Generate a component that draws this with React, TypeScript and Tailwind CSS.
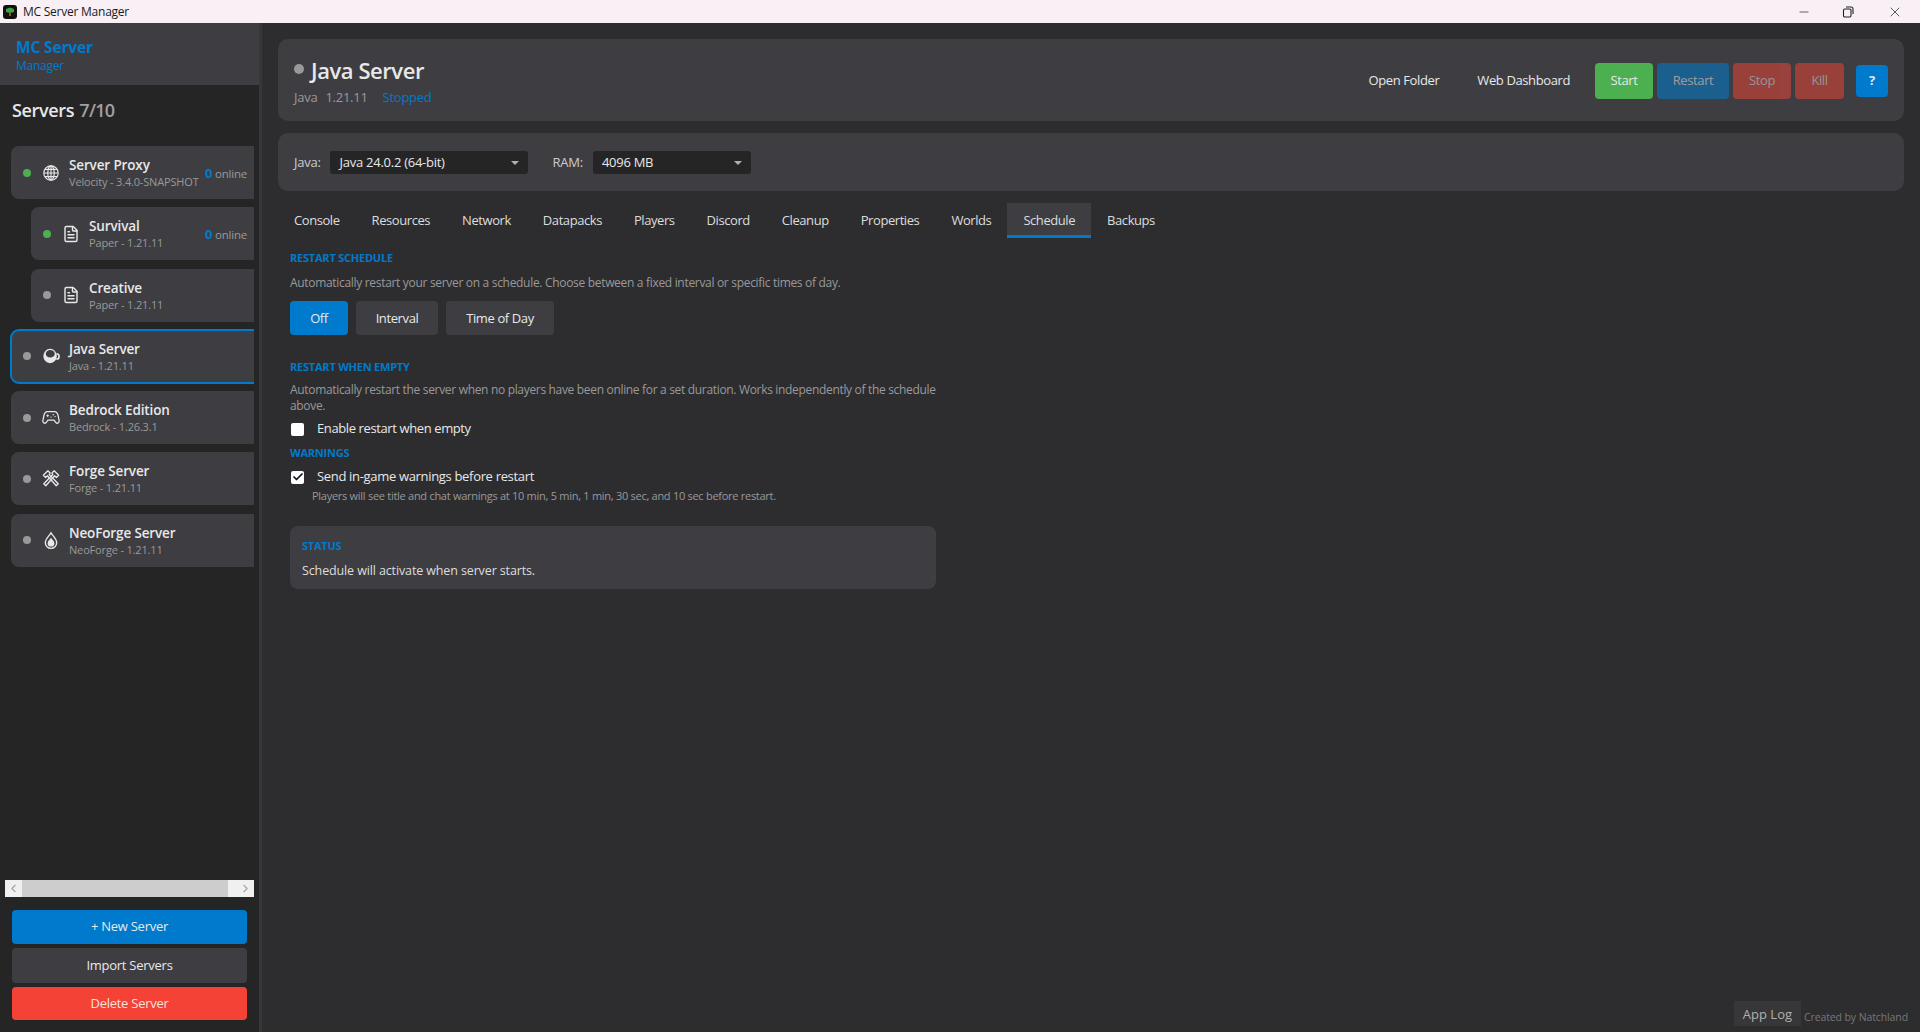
import React from "react";
import { Minus, X, Check, ChevronLeft, ChevronRight, FileText } from "lucide-react";

const ink = "#e8e8e8";

function Hammers() {
  return (
    <svg viewBox="0 0 20 20" width="19" height="19" fill="none" stroke={ink} strokeWidth="1.5" strokeLinejoin="round" strokeLinecap="round">
      <path d="M6.5 1.5 L1.5 6.5 L4 9 L6 7 L15.8 18 L18 15.8 L8 5.5 L9 4 Z" />
      <path d="M13.5 1.5 L18.5 6.5 L16 9 L14 7 L4.2 18 L2 15.8 L12 5.5 L11 4 Z" />
    </svg>
  );
}

function Cup() {
  return (
    <svg viewBox="0 0 20 20" width="18" height="18">
      <ellipse cx="9" cy="10" rx="7.5" ry="8" fill={ink} />
      <ellipse cx="9.2" cy="7.6" rx="5" ry="4.2" fill="#3e3e42" />
      <path d="M16 7.5 a3 3 0 0 1 0 6" fill="none" stroke={ink} strokeWidth="1.8" />
    </svg>
  );
}

function Flame() {
  return (
    <svg viewBox="0 0 20 20" width="19" height="19">
      <path d="M10 1.5 C12 5 16.3 8 16.3 12.5 A6.3 6.3 0 0 1 3.7 12.5 C3.7 8 8 5 10 1.5 Z" fill="none" stroke={ink} strokeWidth="1.5" />
      <path d="M10 7 C11 9 13.8 10.5 13.8 13 A3.8 3.8 0 0 1 6.2 13 C6.2 10.5 9 9 10 7 Z" fill={ink} />
    </svg>
  );
}

function GlobeGrid() {
  return (
    <svg viewBox="0 0 20 20" width="18" height="18" fill="none" stroke={ink} strokeWidth="1.3">
      <circle cx="10" cy="10" r="8" />
      <ellipse cx="10" cy="10" rx="3.6" ry="8" />
      <path d="M10 2 V18 M2 10 H18 M3.2 6 H16.8 M3.2 14 H16.8" />
    </svg>
  );
}

function Pad() {
  return (
    <svg viewBox="0 0 20 20" width="19" height="19" fill="none" stroke={ink} strokeWidth="1.4" strokeLinejoin="round">
      <path d="M6 3.5 H14 C16.5 3.5 17.4 5.5 17.9 8 L19 13.5 C19.4 16 16.9 17.3 15.4 15.6 L13.4 13 H6.6 L4.6 15.6 C3.1 17.3 0.6 16 1 13.5 L2.1 8 C2.6 5.5 3.5 3.5 6 3.5 Z" />
      <path d="M6.3 6.5 V9.5 M4.8 8 H7.8" strokeWidth="1" />
      <circle cx="12.5" cy="7" r="0.8" fill={ink} stroke="none" />
      <circle cx="14.5" cy="9" r="0.8" fill={ink} stroke="none" />
      <circle cx="10" cy="9.5" r="0.7" fill={ink} stroke="none" />
    </svg>
  );
}

function Dot({ on, big }: { on?: boolean; big?: boolean }) {
  return <span className={`block rounded-full shrink-0 ${big ? "w-[10px] h-[10px]" : "w-[8px] h-[8px]"} ${on ? "bg-[#4caf50]" : "bg-[#999999]"}`} />;
}

type Row = { name: string; sub: string; on?: boolean; child?: boolean; sel?: boolean; online?: boolean; icon: React.ReactNode };

const doc = <FileText size={18} strokeWidth={1.9} color={ink} />;

const rows: Row[] = [
  { name: "Server Proxy", sub: "Velocity - 3.4.0-SNAPSHOT", on: true, online: true, icon: <GlobeGrid /> },
  { name: "Survival", sub: "Paper - 1.21.11", on: true, child: true, online: true, icon: doc },
  { name: "Creative", sub: "Paper - 1.21.11", child: true, icon: doc },
  { name: "Java Server", sub: "Java - 1.21.11", sel: true, icon: <Cup /> },
  { name: "Bedrock Edition", sub: "Bedrock - 1.26.3.1", icon: <Pad /> },
  { name: "Forge Server", sub: "Forge - 1.21.11", icon: <Hammers /> },
  { name: "NeoForge Server", sub: "NeoForge - 1.21.11", icon: <Flame /> },
];

function Card({ r }: { r: Row }) {
  return (
    <div
      className={`h-[53px] rounded-[8px] bg-[#3e3e42] flex items-center pr-[24px] shrink-0 ${
        r.child ? "ml-[26px] w-[240px] pl-[12px]" : "ml-[6px] w-[260px] pl-[12px]"
      } ${r.sel ? "outline-2 outline-[#007acc] -outline-offset-1" : ""}`}
    >
      <Dot on={r.on} />
      <span className="w-[18px] h-[18px] ml-[11px] mr-[9px] flex items-center justify-center shrink-0">{r.icon}</span>
      <div className="flex-1 min-w-0 flex flex-col pt-[2px]">
        <span className="text-[13.5px] leading-[17px] font-semibold text-[#e8e8e8] tracking-[-0.01em] whitespace-nowrap">{r.name}</span>
        <span className="text-[11px] leading-[16px] text-[#999999] tracking-[-0.015em] whitespace-nowrap">{r.sub}</span>
      </div>
      {r.online && (
        <span className="mt-[2px] text-[11.5px] text-[#999999] whitespace-nowrap tracking-[-0.02em] flex items-baseline">
          <b className="text-[13px] text-[#007acc] font-bold mr-[3px]">0</b>online
        </span>
      )}
    </div>
  );
}

function SectionTitle({ children }: { children: React.ReactNode }) {
  return <div className="text-[11px] leading-[16px] font-bold text-[#007acc] uppercase tracking-[-0.02em]">{children}</div>;
}

function Box({ checked }: { checked?: boolean }) {
  return (
    <span className="w-[13px] h-[13px] bg-white rounded-[2px] flex items-center justify-center shrink-0 ml-[1px]">
      {checked && <Check size={12} strokeWidth={3.5} color="#111111" />}
    </span>
  );
}

const tabs = ["Console", "Resources", "Network", "Datapacks", "Players", "Discord", "Cleanup", "Properties", "Worlds", "Schedule", "Backups"];

export default function App() {
  return (
    <div className="w-[1920px] h-[1032px] flex flex-col overflow-hidden bg-[#2d2d30] font-['Open_Sans','Noto_Sans',sans-serif] text-[#e8e8e8]">
      <div className="h-[23px] bg-[#f9f0f5] flex items-center shrink-0 text-[#1a1a1a]">
        <span className="ml-[3px] w-[14px] h-[14px] rounded-[3px] bg-[#111111] flex items-center justify-center">
          <svg viewBox="0 0 10 10" width="10" height="10">
            <path d="M1 2 L5 0.5 L9 2 L9 5 L5 6 L1 5 Z" fill="#3fa53a" />
            <rect x="4" y="5.5" width="2" height="3.5" fill="#8a5a2b" />
          </svg>
        </span>
        <span className="ml-[6px] text-[12px] tracking-[-0.02em]">MC Server Manager</span>
        <div className="ml-auto flex items-center text-[#222222]">
          <Minus size={14} strokeWidth={1.2} className="mr-[31px]" />
          <svg viewBox="0 0 12 12" width="12" height="12" fill="none" stroke="#222222" strokeWidth="1.1" className="mr-[33px]">
            <rect x="1.5" y="3" width="7.5" height="8" rx="1.2" />
            <path d="M4 1 H9 a2 2 0 0 1 2 2 V8" />
          </svg>
          <X size={16} strokeWidth={1.1} className="mr-[17px]" />
        </div>
      </div>

      <div className="flex-1 flex min-h-0">
        <aside className="w-[259px] bg-[#252526] flex flex-col shrink-0">
          <div className="h-[62px] bg-[#3e3e42] pl-[16px] pt-[14px] flex flex-col shrink-0">
            <span className="text-[15.5px] leading-[21px] font-bold text-[#007acc] tracking-[-0.01em]">MC Server</span>
            <span className="text-[12px] leading-[15px] text-[#007acc] tracking-[-0.02em]">Manager</span>
          </div>
          <div className="pl-[12px] pt-[13px] h-[61px] text-[18px] leading-[24px] font-semibold shrink-0 tracking-[-0.02em]">
            Servers <span className="ml-[1px] font-semibold text-[#a0a0a0] tracking-[-0.04em]">7/10</span>
          </div>
          <div className="ml-[5px] w-[249px] flex-1 overflow-hidden flex flex-col gap-[8.3px] min-h-0">
            {rows.map((r) => (
              <Card key={r.name} r={r} />
            ))}
          </div>
          <div className="ml-[5px] w-[249px] h-[17px] flex shrink-0">
            <span className="w-[17px] bg-[#f0f0f0] flex items-center justify-center">
              <ChevronLeft size={13} color="#a3a3a3" />
            </span>
            <span className="flex-1 bg-[#cdcdcd]" />
            <span className="w-[26px] bg-[#f0f0f0] flex items-center justify-end pr-[2px]">
              <ChevronRight size={13} color="#a3a3a3" />
            </span>
          </div>
          <div className="mx-[12px] mt-[13px] mb-[12px] flex flex-col gap-[4px] shrink-0 text-[13px] tracking-[-0.02em]">
            <button className="h-[34px] rounded-[4px] bg-[#007acc] text-[#e8e8e8]">+ New Server</button>
            <button className="h-[35px] rounded-[4px] bg-[#3e3e42] text-[#e8e8e8]">Import Servers</button>
            <button className="h-[33px] rounded-[4px] bg-[#f44336] text-[#f5e0de]">Delete Server</button>
          </div>
        </aside>

        <div className="w-[3px] bg-[#37373a] shrink-0" />

        <main className="flex-1 min-w-0 flex flex-col pt-[16px] px-[16px] pb-[6px]">
          <div className="h-[82px] rounded-[10px] bg-[#3e3e42] flex items-center pl-[16px] pr-[16px] shrink-0">
            <div className="flex flex-col">
              <div className="flex items-center h-[32px] -mt-[1px]">
                <span className="block -mt-[2px]">
                  <Dot big />
                </span>
                <span className="ml-[7px] text-[22px] leading-[30px] font-semibold tracking-[-0.02em]">Java Server</span>
              </div>
              <div className="text-[13px] leading-[18px] text-[#999999] flex tracking-[-0.02em] mt-[2px]">
                <span>Java</span>
                <span className="ml-[8px]">1.21.11</span>
                <span className="ml-[15px] text-[#007acc]">Stopped</span>
              </div>
            </div>
            <div className="ml-auto flex items-center text-[13px] tracking-[-0.03em] mt-[1px]">
              <span className="mr-[38px]">Open Folder</span>
              <span className="mr-[25px]">Web Dashboard</span>
              <span className="h-[36px] w-[58px] rounded-[4px] bg-[#4caf50] flex items-center justify-center mr-[4px]">Start</span>
              <span className="h-[36px] w-[72px] rounded-[4px] bg-[#007acc] opacity-55 flex items-center justify-center mr-[4px]">Restart</span>
              <span className="h-[36px] w-[58px] rounded-[4px] bg-[#f44336] opacity-50 flex items-center justify-center mr-[4px]">Stop</span>
              <span className="h-[36px] w-[49px] rounded-[4px] bg-[#f44336] opacity-50 flex items-center justify-center mr-[12px]">Kill</span>
              <span className="h-[32px] w-[32px] rounded-[4px] bg-[#007acc] flex items-center justify-center font-bold">?</span>
            </div>
          </div>

          <div className="h-[58px] mt-[12px] rounded-[10px] bg-[#3e3e42] flex items-center pl-[16px] text-[13px] tracking-[-0.02em] shrink-0">
            <span className="mt-[1px] text-[#cccccc]">Java:</span>
            <span className="ml-[9px] w-[198px] h-[23px] mt-[1px] rounded-[3px] bg-[#252526] flex items-center pl-[10px] pr-[9px]">
              Java 24.0.2 (64-bit)
              <span className="ml-auto w-0 h-0 border-x-[4px] border-x-transparent border-t-[4px] border-t-[#b0b0b0]" />
            </span>
            <span className="ml-[25px] mt-[1px] text-[#cccccc]">RAM:</span>
            <span className="ml-[10px] w-[158px] h-[23px] mt-[1px] rounded-[3px] bg-[#252526] flex items-center pl-[9px] pr-[9px]">
              4096 MB
              <span className="ml-auto w-0 h-0 border-x-[4px] border-x-transparent border-t-[4px] border-t-[#b0b0b0]" />
            </span>
          </div>

          <div className="h-[35px] mt-[12px] flex shrink-0 text-[13px] tracking-[-0.033em]">
            {tabs.map((t) => (
              <span
                key={t}
                className={`px-[16px] pt-[4px] flex items-center border-b-[3px] ${
                  t === "Schedule" ? "bg-[#3e3e42] border-[#007acc]" : "border-transparent"
                } text-[#dddddd]`}
              >
                {t}
              </span>
            ))}
          </div>

          <div className="pl-[12px] pt-[12px] w-[658px] shrink-0">
            <SectionTitle>Restart Schedule</SectionTitle>
            <p className="mt-[8px] text-[12px] leading-[17px] text-[#999999] tracking-[-0.026em]">
              Automatically restart your server on a schedule. Choose between a fixed interval or specific times of day.
            </p>
            <div className="mt-[10px] flex gap-[8px] text-[13px] tracking-[-0.03em]">
              <span className="h-[34px] w-[58px] pt-[1px] rounded-[4px] bg-[#007acc] flex items-center justify-center">Off</span>
              <span className="h-[34px] w-[82px] pt-[1px] rounded-[4px] bg-[#3e3e42] flex items-center justify-center">Interval</span>
              <span className="h-[34px] w-[108px] pt-[1px] rounded-[4px] bg-[#3e3e42] flex items-center justify-center">Time of Day</span>
            </div>
            <div className="mt-[24px]">
              <SectionTitle>Restart When Empty</SectionTitle>
            </div>
            <p className="mt-[7px] -mr-[4px] text-[12px] leading-[16px] text-[#999999] tracking-[-0.027em]">
              Automatically restart the server when no players have been online for a set duration. Works independently of the schedule above.
            </p>
            <div className="mt-[6px] flex items-center h-[18px] text-[13px] tracking-[-0.03em]">
              <Box />
              <span className="ml-[13px]">Enable restart when empty</span>
            </div>
            <div className="mt-[7px]">
              <SectionTitle>Warnings</SectionTitle>
            </div>
            <div className="mt-[7px] flex items-center h-[18px] text-[13px] tracking-[-0.025em]">
              <Box checked />
              <span className="ml-[13px]">Send in-game warnings before restart</span>
            </div>
            <p className="mt-[2px] ml-[22px] text-[11px] leading-[16px] text-[#999999] tracking-[-0.025em]">
              Players will see title and chat warnings at 10 min, 5 min, 1 min, 30 sec, and 10 sec before restart.
            </p>
            <div className="mt-[22px] h-[63px] rounded-[8px] bg-[#3e3e42] pl-[12px] pt-[12px]">
              <SectionTitle>Status</SectionTitle>
              <p className="mt-[8px] text-[12.5px] leading-[18px] text-[#dddddd] tracking-[-0.01em]">Schedule will activate when server starts.</p>
            </div>
          </div>

          <div className="mt-auto flex items-end justify-end shrink-0 -mr-[4px]">
            <span className="h-[25px] w-[67px] pt-[2px] bg-[#37373a] flex items-center justify-center text-[13px] text-[#b0b0b0]">App Log</span>
            <span className="ml-[3px] mb-[1px] text-[10.5px] leading-[16px] text-[#777777] tracking-[-0.01em]">Created by Natchland</span>
          </div>
        </main>
      </div>
    </div>
  );
}
